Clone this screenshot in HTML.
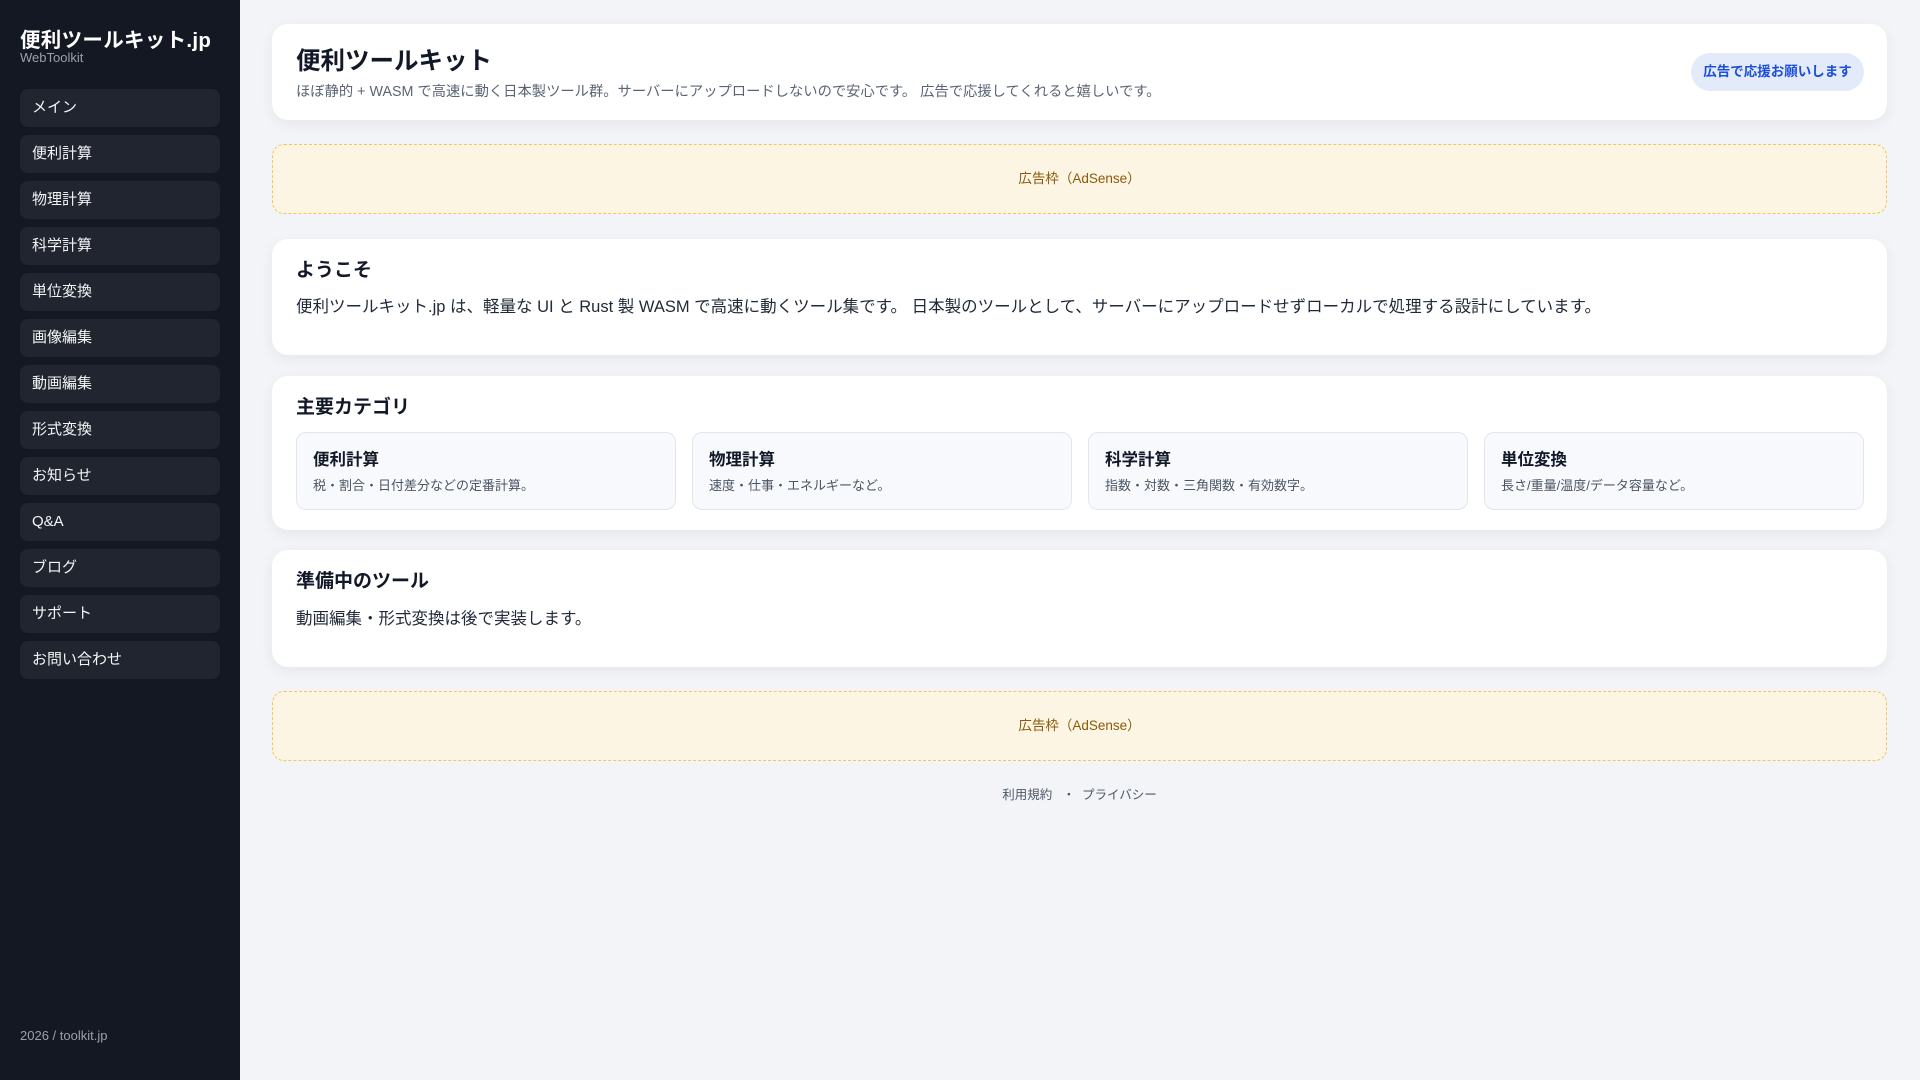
<!DOCTYPE html>
<html><head><meta charset="utf-8"><style>
*{box-sizing:border-box;margin:0;padding:0}
body{width:1920px;height:1080px;background:#f3f4f8;font-family:"Liberation Sans","Noto Sans CJK JP",sans-serif;color:#111827;position:relative;overflow:hidden}
.side{position:absolute;left:0;top:0;width:240px;height:1080px;background:#141823;color:#fff}
.side h1{position:absolute;left:20px;top:23px;font-size:20.5px;font-weight:700;letter-spacing:.3px}
.side .sub{position:absolute;left:20px;top:50px;font-size:13px;color:#9aa0ab}
.nav{position:absolute;left:20px;top:89px;width:200px}
.nav div{height:38px;margin-bottom:8px;background:#212530;border-radius:8px;font-size:15px;line-height:38px;padding-left:12px;color:#f3f4f6}
.side .foot{position:absolute;left:20px;top:1028px;font-size:13px;color:#9aa0ab}
.card{position:absolute;left:272px;width:1615px;background:#fff;border-radius:16px;box-shadow:0 4px 14px rgba(20,24,40,.06)}
.ad{position:absolute;left:272px;width:1615px;height:70px;background:#fdf5e3;border:1px dashed #f2c65a;border-radius:12px;text-align:center;line-height:68px;font-size:13.5px;color:#8a5a0a}
h2{font-size:19px;font-weight:700}
.cat{position:absolute;top:56px;width:380px;height:78px;border:1px solid #e2e5ec;border-radius:10px;background:#f8f9fc;padding:13px 16px}
.cat b{display:block;font-size:16.5px}
.cat span{display:block;font-size:13px;color:#4b5563;margin-top:5px}
</style></head><body>
<div class="side">
<h1>便利ツールキット.jp</h1>
<div class="sub">WebToolkit</div>
<div class="nav"><div>メイン</div><div>便利計算</div><div>物理計算</div><div>科学計算</div><div>単位変換</div><div>画像編集</div><div>動画編集</div><div>形式変換</div><div>お知らせ</div><div>Q&amp;A</div><div>ブログ</div><div>サポート</div><div>お問い合わせ</div></div>
<div class="foot">2026 / toolkit.jp</div>
</div>
<div class="card" style="top:24px;height:96px">
<div style="position:absolute;left:24px;top:18px;font-size:24.5px;font-weight:700">便利ツールキット</div>
<div style="position:absolute;left:24px;top:56px;font-size:14.3px;color:#5b6474">ほぼ静的 + WASM で高速に動く日本製ツール群。サーバーにアップロードしないので安心です。 広告で応援してくれると嬉しいです。</div>
<div style="position:absolute;left:1419px;top:29px;width:173px;height:38px;border-radius:19px;background:#e3ebfb;color:#1d4ed8;font-size:13.5px;font-weight:700;text-align:center;line-height:38px">広告で応援お願いします</div>
</div>
<div class="ad" style="top:144px">広告枠（AdSense）</div>
<div class="card" style="top:239px;height:116px;padding:16px 24px">
<h2>ようこそ</h2>
<p style="font-size:16.5px;margin-top:11px;color:#1f2937">便利ツールキット.jp は、軽量な UI と Rust 製 WASM で高速に動くツール集です。 日本製のツールとして、サーバーにアップロードせずローカルで処理する設計にしています。</p>
</div>
<div class="card" style="top:376px;height:154px;padding:16px 24px">
<h2>主要カテゴリ</h2>
<div class="cat" style="left:24px"><b>便利計算</b><span>税・割合・日付差分などの定番計算。</span></div>
<div class="cat" style="left:420px"><b>物理計算</b><span>速度・仕事・エネルギーなど。</span></div>
<div class="cat" style="left:816px"><b>科学計算</b><span>指数・対数・三角関数・有効数字。</span></div>
<div class="cat" style="left:1212px"><b>単位変換</b><span>長さ/重量/温度/データ容量など。</span></div>
</div>
<div class="card" style="top:550px;height:117px;padding:16px 24px">
<h2>準備中のツール</h2>
<p style="font-size:16.5px;margin-top:12px;color:#1f2937">動画編集・形式変換は後で実装します。</p>
</div>
<div class="ad" style="top:691px">広告枠（AdSense）</div>
<div style="position:absolute;left:272px;width:1615px;top:784px;text-align:center;font-size:12.5px;color:#4b5563">利用規約 &nbsp; ・ &nbsp;プライバシー</div>
</body></html>
